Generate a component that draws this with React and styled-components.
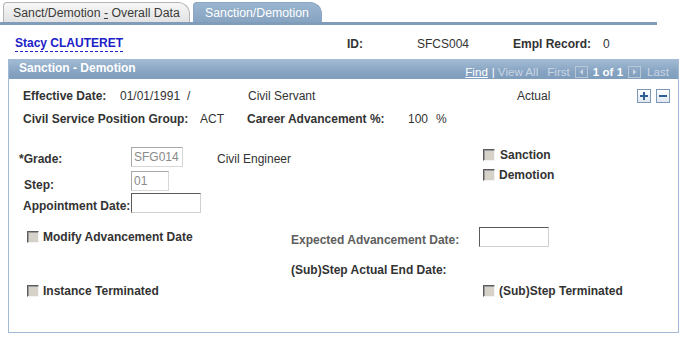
import styled, { createGlobalStyle } from "styled-components";

const GlobalStyle = createGlobalStyle`
  body {
    margin: 0;
    background: #ffffff;
    font-family: "Liberation Sans", Arial, sans-serif;
    font-size: 12px;
    color: #333333;
  }
`;

const Page = styled.div`
  width: 684px;
  height: 340px;
  overflow: hidden;
  background: #ffffff;
`;

const TabBar = styled.div`
  display: flex;
  gap: 3px;
  width: 654px;
  padding: 2px 0 0 3px;
  border-bottom: 3px solid #7f9cbb;
`;

const Tab = styled.div`
  box-sizing: border-box;
  width: ${(p) => p.$width}px;
  height: 20px;
  padding-left: ${(p) => (p.$active ? 11 : 9)}px;
  display: flex;
  align-items: center;
  font-size: 12.3px;
  color: ${(p) => (p.$active ? "#ffffff" : "#3a3a3a")};
  border: 1px solid ${(p) => (p.$active ? "#8aa6c4" : "#b4b4b4")};
  border-bottom: none;
  border-radius: 4px 12px 0 0;
  background: ${(p) =>
    p.$active
      ? "linear-gradient(#9bb5cf, #86a3c1)"
      : "linear-gradient(#f7f7f7, #e2e2e2)"};

  u {
    text-decoration: underline;
  }
`;

const HeaderRow = styled.div`
  display: grid;
  grid-template-columns: 332px 70px 96px 90px auto;
  align-items: center;
  height: 31px;
  padding: 3px 0 0 15px;
`;

const NameLink = styled.span`
  justify-self: start;
  font-weight: bold;
  color: #2020c8;
  line-height: 14px;
  padding-bottom: 1px;
  border-bottom: 1px dashed #2020c8;
`;

const Label = styled.span`
  font-weight: bold;
  color: ${(p) => p.$color || "#333333"};
  margin-left: ${(p) => p.$shift || 0}px;
  padding-top: ${(p) => p.$nudge || 0}px;
  white-space: nowrap;
`;

const Value = styled.span`
  color: #333333;
  padding-top: ${(p) => p.$nudge || 0}px;
  white-space: nowrap;
`;

const Panel = styled.div`
  box-sizing: border-box;
  width: 671px;
  height: 274px;
  margin-left: 8px;
  border: 1px solid #a3bad6;
`;

const PanelHeader = styled.div`
  height: 19px;
  display: flex;
  justify-content: space-between;
  background: linear-gradient(#a3bbd4, #87a4c2 60%, #7f9dbc);
`;

const PanelTitle = styled.span`
  padding: 1px 0 0 10px;
  font-weight: bold;
  color: #ffffff;
  line-height: 14px;
`;

const Nav = styled.div`
  display: flex;
  align-items: center;
  align-self: flex-end;
  height: 15px;
  padding: 0 9px 0 0;
  font-size: 11.6px;
`;

const NavItem = styled.span`
  margin-left: ${(p) => p.$gap || 0}px;
  color: ${(p) => (p.$dim ? "#c9d6e4" : "#ffffff")};
  font-weight: ${(p) => (p.$bold ? "bold" : "normal")};
  text-decoration: ${(p) => (p.$link ? "underline" : "none")};
  display: flex;
  align-items: center;
`;

const Body = styled.div`
  display: flex;
  flex-direction: column;
  padding-left: 14px;
`;

const Row = styled.div`
  display: grid;
  grid-template-columns: ${(p) => p.$cols};
  align-items: center;
  height: ${(p) => p.$height || 20}px;
  margin-top: ${(p) => p.$top || 0}px;
  padding-left: ${(p) => p.$indent || 0}px;
`;

const RowButtons = styled.div`
  display: flex;
  gap: 5px;
`;

const SquareButton = styled.span`
  box-sizing: border-box;
  width: 14px;
  height: 14px;
  display: flex;
  align-items: center;
  justify-content: center;
  border: 1px solid #7d98b6;
  background: linear-gradient(#ffffff, #dfe7f0);
`;

const GradeBlock = styled.div`
  display: flex;
  margin-top: 16px;
`;

const GradeFields = styled.div`
  display: flex;
  flex-direction: column;
  gap: 3px;
  width: 460px;
  padding-top: 2px;
`;

const Flags = styled.div`
  display: flex;
  flex-direction: column;
`;

const Field = styled.span`
  box-sizing: border-box;
  width: ${(p) => p.$width}px;
  height: 20px;
  padding: 2px 0 0 2px;
  font-size: 12px;
  color: #8a8a8a;
  background: #ffffff;
  border: 1px solid;
  border-color: ${(p) =>
    p.$disabled ? "#a8a8a8 #d8d8d8 #d8d8d8 #a8a8a8" : "#5a5a5a #d0d0d0 #d0d0d0 #5a5a5a"};
`;

const CheckItem = styled.label`
  display: flex;
  align-items: center;
  gap: ${(p) => p.$gap || 5}px;
  height: 20px;
  font-weight: bold;
  color: #333333;
  white-space: nowrap;
`;

const Box = styled.span`
  box-sizing: border-box;
  width: 12px;
  height: 12px;
  flex: none;
  background: #d6d2ca;
  border: 1px solid;
  border-color: #5c5c5c #f2f2f2 #f2f2f2 #5c5c5c;
  box-shadow: inset 1px 1px 0 #9a9a9a;
`;

const PageArrow = ({ dir }) => (
  <svg width="13" height="12" viewBox="0 0 13 12">
    <rect x="0.5" y="0.5" width="12" height="11" fill="none" stroke="#b7c7d8" />
    {dir === "left" ? (
      <path d="M8 3 L4.5 6 L8 9 Z" fill="#c6d3e1" />
    ) : (
      <path d="M5 3 L8.5 6 L5 9 Z" fill="#c6d3e1" />
    )}
  </svg>
);

const Check = ({ children, gap }) => (
  <CheckItem $gap={gap}>
    <Box />
    {children}
  </CheckItem>
);

const App = () => {
  return (
    <Page>
      <GlobalStyle />
      <TabBar>
        <Tab $width={187}>
          Sanct/Demotion&nbsp;<u>-</u>&nbsp;Overall Data
        </Tab>
        <Tab $width={129} $active>
          Sanction/Demotion
        </Tab>
      </TabBar>

      <HeaderRow>
        <NameLink>Stacy CLAUTERET</NameLink>
        <Label>ID:</Label>
        <Value>SFCS004</Value>
        <Label>Empl Record:</Label>
        <Value>0</Value>
      </HeaderRow>

      <Panel>
        <PanelHeader>
          <PanelTitle>Sanction - Demotion</PanelTitle>
          <Nav>
            <NavItem $link>Find</NavItem>
            <NavItem $gap={4}>|</NavItem>
            <NavItem $gap={3} $dim>View All</NavItem>
            <NavItem $gap={9} $dim>First</NavItem>
            <NavItem $gap={5}>
              <PageArrow dir="left" />
            </NavItem>
            <NavItem $gap={5} $bold>1 of 1</NavItem>
            <NavItem $gap={5}>
              <PageArrow dir="right" />
            </NavItem>
            <NavItem $gap={6} $dim>Last</NavItem>
          </Nav>
        </PanelHeader>

        <Body>
          <Row $cols="97px 67px 61px 269px 120px auto" $top={7}>
            <Label>Effective Date:</Label>
            <Value>01/01/1991</Value>
            <Value>/</Value>
            <Value>Civil Servant</Value>
            <Value>Actual</Value>
            <RowButtons>
              <SquareButton>
                <svg width="10" height="10" viewBox="0 0 10 10">
                  <path d="M5 1 V9 M1 5 H9" stroke="#2d5f93" strokeWidth="2" />
                </svg>
              </SquareButton>
              <SquareButton>
                <svg width="10" height="10" viewBox="0 0 10 10">
                  <path d="M1 5 H9" stroke="#2d5f93" strokeWidth="2" />
                </svg>
              </SquareButton>
            </RowButtons>
          </Row>

          <Row $cols="177px 47px 161px 28px auto" $top={3}>
            <Label>Civil Service Position Group:</Label>
            <Value>ACT</Value>
            <Label>Career Advancement %:</Label>
            <Value>100</Value>
            <Value>%</Value>
          </Row>

          <GradeBlock>
            <GradeFields>
              <Row $cols="108px 86px auto">
                <Label $shift={-4} $nudge={3}>*Grade:</Label>
                <Field $width={52} $disabled>SFG014</Field>
                <Value $nudge={4}>Civil Engineer</Value>
              </Row>
              <Row $cols="108px auto">
                <Label $shift={1} $nudge={8}>Step:</Label>
                <Field $width={38} $disabled>01</Field>
              </Row>
              <Row $cols="108px auto">
                <Label $nudge={5}>Appointment Date:</Label>
                <Field $width={70} />
              </Row>
            </GradeFields>
            <Flags>
              <Check>Sanction</Check>
              <Check gap={4}>Demotion</Check>
            </Flags>
          </GradeBlock>

          <Row $cols="264px 188px auto" $top={13} $indent={4}>
            <Check gap={4}>Modify Advancement Date</Check>
            <Label $color="#5e5e5e" $nudge={7}>
              Expected Advancement Date:
            </Label>
            <Field $width={70} />
          </Row>

          <Row $cols="auto" $height={14} $top={17} $indent={268}>
            <Label>(Sub)Step Actual End Date:</Label>
          </Row>

          <Row $cols="456px auto" $top={4} $indent={4}>
            <Check gap={4}>Instance Terminated</Check>
            <Check gap={4}>(Sub)Step Terminated</Check>
          </Row>
        </Body>
      </Panel>
    </Page>
  );
};

export default App;
